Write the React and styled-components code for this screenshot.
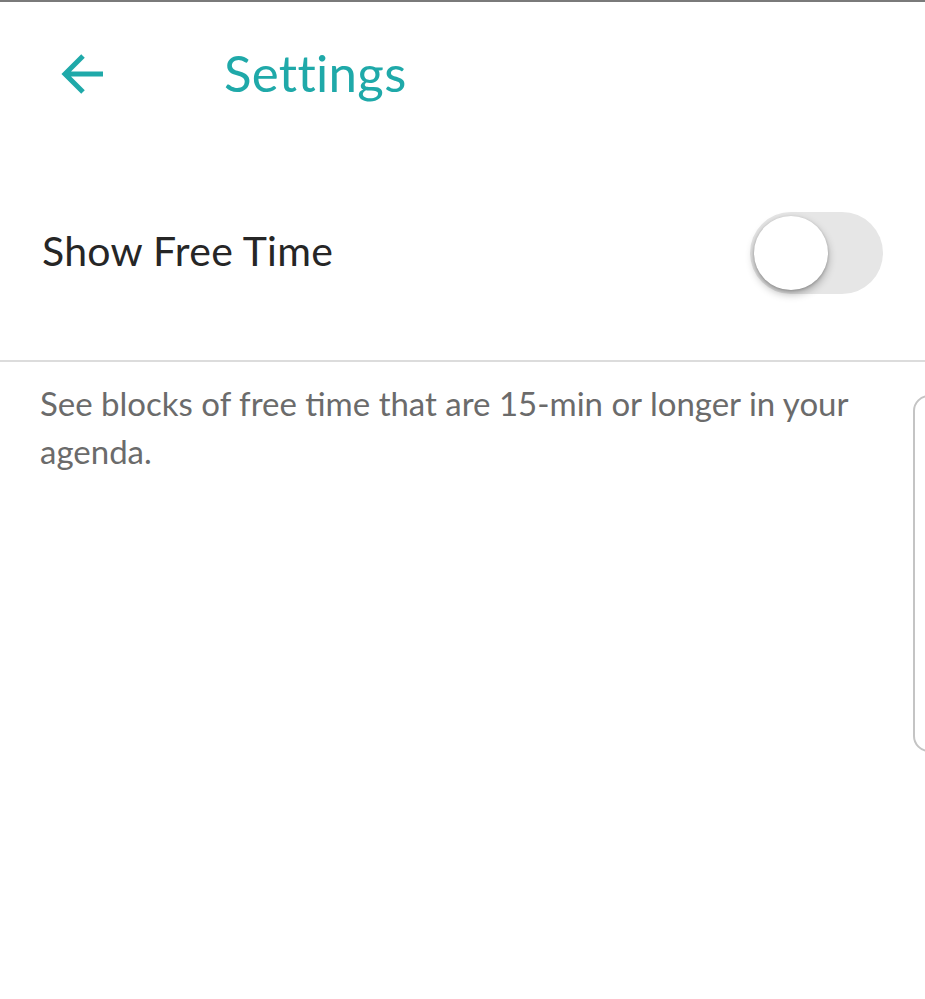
import React, { useState } from "react";
import styled, { createGlobalStyle } from "styled-components";

const GlobalStyle = createGlobalStyle`
  html, body {
    margin: 0;
    padding: 0;
    background: #fff;
  }
  body {
    font-family: Lato, "Open Sans", sans-serif;
  }
`;

const Page = styled.div`
  position: relative;
  min-height: 999px;
  border-top: 2px solid #7a7a7a;
  box-sizing: border-box;
  overflow: hidden;
`;

const Header = styled.header`
  display: flex;
  align-items: center;
  height: 140px;
  margin-bottom: 4px;
  padding: 0 0 0 60px;
  box-sizing: border-box;
`;

const BackButton = styled.button`
  display: flex;
  align-items: center;
  justify-content: center;
  width: 46px;
  height: 46px;
  margin-top: 4px;
  padding: 0;
  border: none;
  background: none;
  cursor: pointer;
`;

const Title = styled.h1`
  margin: 0 0 0 118px;
  font-size: 51px;
  font-weight: 400;
  color: #1fa9a9;
  letter-spacing: 0.3px;
`;

const Row = styled.div`
  display: flex;
  align-items: center;
  justify-content: space-between;
  height: 214px;
  padding: 0 42px 0 42px;
  border-bottom: 2px solid #dcdcdc;
`;

const Label = styled.span`
  margin-bottom: 6px;
  font-size: 41px;
  color: #262626;
  letter-spacing: 0.3px;
`;

const Track = styled.button`
  position: relative;
  width: 133px;
  height: 82px;
  padding: 0;
  border: none;
  border-radius: 41px;
  background: ${p => (p.$on ? "#9fdcdc" : "#e6e6e6")};
  cursor: pointer;
`;

const Thumb = styled.span`
  position: absolute;
  top: 4px;
  left: ${p => (p.$on ? "55px" : "4px")};
  width: 74px;
  height: 74px;
  border-radius: 50%;
  background: ${p => (p.$on ? "#1fa9a9" : "#fff")};
  box-shadow: 0 4px 8px rgba(0, 0, 0, 0.3), 0 1px 3px rgba(0, 0, 0, 0.2);
  transition: left 0.15s ease;
`;

const Description = styled.p`
  margin: 0;
  padding: 17px 60px 0 40px;
  font-size: 33px;
  line-height: 48px;
  color: #6b6b6b;
`;

const EdgeHandle = styled.div`
  position: absolute;
  top: 393px;
  left: 913px;
  width: 40px;
  height: 353px;
  border: 2px solid #c4c4c4;
  border-radius: 16px;
`;

export default function App() {
  const [on, setOn] = useState(false);
  return (
    <>
      <GlobalStyle />
      <Page>
        <Header>
          <BackButton aria-label="Back">
            <svg width="44" height="42" viewBox="0 0 44 42" fill="none">
              <path
                d="M42 21H5M22 3L4 21l18 18"
                stroke="#1fa9a9"
                strokeWidth="5"
              />
            </svg>
          </BackButton>
          <Title>Settings</Title>
        </Header>
        <Row>
          <Label>Show Free Time</Label>
          <Track $on={on} onClick={() => setOn(!on)} aria-label="Show Free Time">
            <Thumb $on={on} />
          </Track>
        </Row>
        <Description>
          See blocks of free time that are 15-min or longer in your agenda.
        </Description>
        <EdgeHandle />
      </Page>
    </>
  );
}
